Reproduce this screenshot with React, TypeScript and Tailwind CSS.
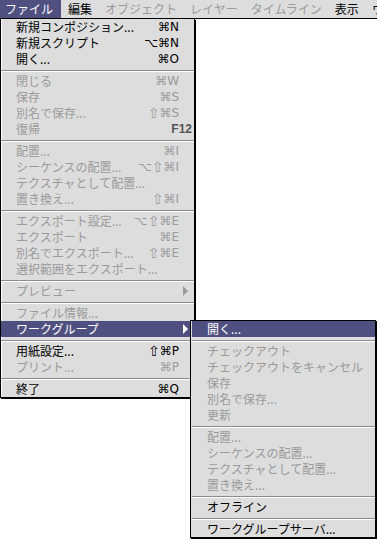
import clsx from "clsx";

type Item =
  | { sep: true }
  | {
      sep?: false;
      label: string;
      sc?: string;
      fkey?: string;
      off?: boolean;
      hl?: boolean;
      arrow?: boolean;
    };

const fileMenu: Item[] = [
  { label: "新規コンポジション...", sc: "⌘N" },
  { label: "新規スクリプト", sc: "⌥⌘N" },
  { label: "開く...", sc: "⌘O" },
  { sep: true },
  { label: "閉じる", sc: "⌘W", off: true },
  { label: "保存", sc: "⌘S", off: true },
  { label: "別名で保存...", sc: "⇧⌘S", off: true },
  { label: "復帰", fkey: "F12", off: true },
  { sep: true },
  { label: "配置...", sc: "⌘I", off: true },
  { label: "シーケンスの配置...", sc: "⌥⇧⌘I", off: true },
  { label: "テクスチャとして配置...", off: true },
  { label: "置き換え...", sc: "⇧⌘I", off: true },
  { sep: true },
  { label: "エクスポート設定...", sc: "⌥⇧⌘E", off: true },
  { label: "エクスポート", sc: "⌘E", off: true },
  { label: "別名でエクスポート...", sc: "⇧⌘E", off: true },
  { label: "選択範囲をエクスポート...", off: true },
  { sep: true },
  { label: "プレビュー", arrow: true, off: true },
  { sep: true },
  { label: "ファイル情報...", off: true },
  { label: "ワークグループ", arrow: true, hl: true },
  { sep: true },
  { label: "用紙設定...", sc: "⇧⌘P" },
  { label: "プリント...", sc: "⌘P", off: true },
  { sep: true },
  { label: "終了", sc: "⌘Q" },
];

const workgroupMenu: Item[] = [
  { label: "開く...", hl: true },
  { sep: true },
  { label: "チェックアウト", off: true },
  { label: "チェックアウトをキャンセル", off: true },
  { label: "保存", off: true },
  { label: "別名で保存...", off: true },
  { label: "更新", off: true },
  { sep: true },
  { label: "配置...", off: true },
  { label: "シーケンスの配置...", off: true },
  { label: "テクスチャとして配置...", off: true },
  { label: "置き換え...", off: true },
  { sep: true },
  { label: "オフライン" },
  { sep: true },
  { label: "ワークグループサーバ..." },
];

const bar = [
  { label: "ファイル", hl: true },
  { label: "編集" },
  { label: "オブジェクト", off: true },
  { label: "レイヤー", off: true },
  { label: "タイムライン", off: true },
  { label: "表示" },
  { label: "ウ" },
];

function Arrow() {
  return (
    <svg width="6" height="10" viewBox="0 0 6 10" className="shrink-0">
      <polygon points="0,0 5,5 0,10" fill="currentColor" />
    </svg>
  );
}

// shift glyph is drawn a bit larger, like the old system font
function Shortcut({ sc }: { sc: string }) {
  return (
    <span className="mr-[10px] flex items-center whitespace-nowrap font-['DejaVu_Sans',sans-serif] text-[12px]">
      {sc.split("").map((c, i) =>
        c === "⇧" ? (
          <span key={i} className="text-[14px] leading-none">
            {c}
          </span>
        ) : (
          <span key={i}>{c}</span>
        )
      )}
    </span>
  );
}

function MenuRows({ items }: { items: Item[] }) {
  return (
    <>
      {items.map((it, i) =>
        it.sep ? (
          <div key={i} className="h-[6px] pt-[3px]">
            <div className="border-t border-b border-t-[#8c8c8c] border-b-white" />
          </div>
        ) : (
          <div
            key={i}
            className={clsx(
              "flex h-[16px] items-center pl-[15px] pr-[5px] leading-[16px]",
              it.hl
                ? "bg-[#505080] text-white"
                : it.off
                  ? "text-[#9a9a9a]"
                  : "text-black"
            )}
          >
            <span className="flex-1 whitespace-nowrap">{it.label}</span>
            {it.sc && <Shortcut sc={it.sc} />}
            {it.fkey && (
              <span className="-mr-[3px] font-['Liberation_Sans',sans-serif] text-[12px] font-bold text-[#555]">
                {it.fkey}
              </span>
            )}
            {it.arrow && <Arrow />}
          </div>
        )
      )}
    </>
  );
}

export default function App() {
  return (
    <div className="relative h-[540px] w-[377px] overflow-hidden bg-white font-['Noto_Sans_CJK_JP',sans-serif] text-[12px]">
      {/* menu bar */}
      <div className="flex h-[19px] items-stretch gap-[1px] border-b border-black bg-[#dddddd] leading-[18px]">
        {bar.map((b, i) => (
          <div
            key={i}
            className={clsx(
              "whitespace-nowrap",
              i === 0 ? "pl-[5px] pr-[8px]" : "px-[6px]",
              b.hl
                ? "bg-[#505080] text-white"
                : b.off
                  ? "text-[#9a9a9a]"
                  : "text-black"
            )}
          >
            {b.label}
          </div>
        ))}
      </div>

      {/* file menu */}
      <div className="absolute left-0 top-[19px] w-[195px] border-x border-b border-black bg-[#dddddd] shadow-[1px_1px_0_#000,inset_1px_0_0_#fff]">
        <MenuRows items={fileMenu} />
      </div>

      {/* workgroup submenu */}
      <div className="absolute left-[190px] top-[320px] w-[186px] border border-black bg-[#dddddd] pl-[1px] shadow-[1px_1px_0_#000]">
        <MenuRows items={workgroupMenu} />
      </div>
    </div>
  );
}
